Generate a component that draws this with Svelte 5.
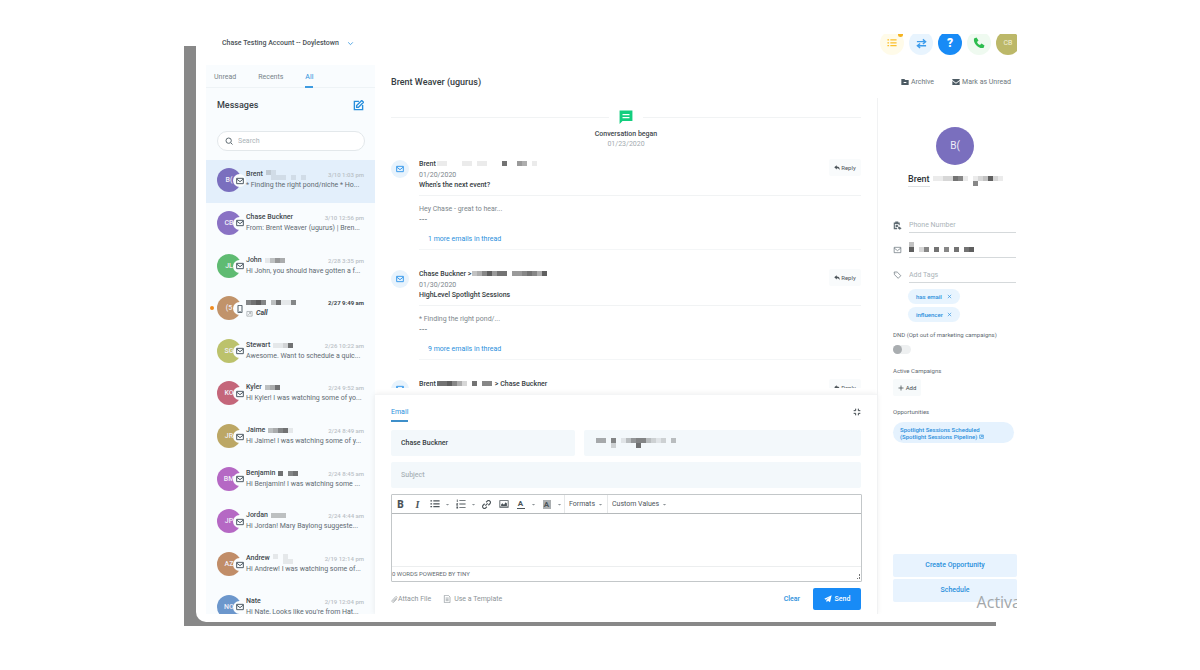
<script lang="ts">
  type Thread = {
    name: string;
    initials: string;
    color: string;
    time: string;
    preview: string;
    mask: string[];
    call?: boolean;
    active?: boolean;
  };

  const threads: Thread[] = [
    { name: 'Brent', initials: 'B(', color: '#7a6fbe', time: '3/10 1:03 pm', preview: '* Finding the right pond/niche * Ho...', mask: ['21000000', '01110101'], active: true },
    { name: 'Chase Buckner', initials: 'CB', color: '#8a72c4', time: '3/10 12:56 pm', preview: 'From: Brent Weaver (ugurus) | Bren...', mask: [] },
    { name: 'John', initials: 'JL', color: '#5fbb72', time: '2/28 3:35 pm', preview: 'Hi John, you should have gotten a f...', mask: ['1354'] },
    { name: '', initials: '(5', color: '#c1936a', time: '2/27 9:49 am', preview: 'Call', mask: ['6786037116'], call: true },
    { name: 'Stewart', initials: 'SG', color: '#bcc26c', time: '2/26 10:22 am', preview: 'Awesome. Want to schedule a quic...', mask: ['1127'] },
    { name: 'Kyler', initials: 'KO', color: '#c4667a', time: '2/24 9:52 am', preview: 'Hi Kyler! I was watching some of yo...', mask: ['347'] },
    { name: 'Jaime', initials: 'JR', color: '#bca765', time: '2/24 8:49 am', preview: 'Hi Jaime! I was watching some of y...', mask: ['34671'] },
    { name: 'Benjamin', initials: 'BM', color: '#b568c4', time: '2/24 8:45 am', preview: 'Hi Benjamin! I was watching some ...', mask: ['7067'] },
    { name: 'Jordan', initials: 'JP', color: '#b568c4', time: '2/24 4:44 am', preview: 'Hi Jordan! Mary Baylong suggeste...', mask: ['333'] },
    { name: 'Andrew', initials: 'AZ', color: '#c18d68', time: '2/19 12:14 pm', preview: 'Hi Andrew! I was watching some of...', mask: ['1010', '0011'] },
    { name: 'Nate', initials: 'NO', color: '#6c97cc', time: '2/19 12:04 pm', preview: "Hi Nate, Looks like you're from Hat...", mask: [] }
  ];

  const emails = [
    { from: 'Brent', mask: ['1100011011000700540100'], to: '', date: '01/20/2020', subject: "When's the next event?", body: 'Hey Chase - great to hear...', more: '1 more emails in thread' },
    { from: 'Chase Buckner >', mask: ['346857705567648'], to: '', date: '01/30/2020', subject: 'HighLevel Spotlight Sessions', body: '* Finding the right pond/...', more: '9 more emails in thread' },
    { from: 'Brent', mask: ['77864207066'], to: '> Chase Buckner', date: '', subject: '', body: '', more: '' }
  ];

  const tags = ['has email', 'influencer'];

  const paths: Record<string, string> = {
    down: 'M4 8l8 8 8-8',
    search: 'M17.5 17.5l5 5M11 3a8 8 0 100 16 8 8 0 000-16z',
    compose: 'M13 3H3v18h18V11M8 16v-4L19 1l4 4-11 11z',
    mail: 'M2 4h20v16H2zM2 6l10 8L22 6',
    phone: 'M6 1h12v22H6zM10 20h4',
    tag: 'M2 3h9l11 11-8 8L3 11zM7 7v1',
    expand: 'M8 2v6H2M16 2v6h6M8 22v-6H2M16 22v-6h6',
    doc: 'M4 1h12l5 5v17H4zM8 9h9M8 13h9M8 17h9',
    clip: 'M20 10l-9 10a4 4 0 01-7-5L15 3a3 3 0 015 4L10 18a2 2 0 01-2-3l8-8',
    close: 'M4 4l16 16M20 4L4 20',
    plus: 'M12 2v20M2 12h20',
    link: 'M9 15l6-6M11 6l3-3a4 4 0 017 7l-4 4M13 18l-3 3a4 4 0 01-7-7l4-4',
    swap: 'M2 8h18M15 3l6 5-6 5M22 17H4M9 12l-6 5 6 5',
    out: 'M3 5h18v16H3zM7 17l9-8M10 9h6v6',
    caret: 'M4 9h16l-8 8z',
    chat: 'M1 1h22v18H6l-5 5zM6 7v2h12V7zM6 12v2h12v-2z',
    reply: 'M1 9l10-8v5c8 0 12 4 12 15-3-6-6-8-12-8v5z',
    folder: 'M1 3h9l3 3h10v15H1zM8 12v3h8v-3z',
    mailFill: 'M1 3h22v3l-11 8L1 6zM1 9l11 8 11-8v12H1z',
    send: 'M1 11L23 1l-5 21-6-5-4 5-1-7 11-9-13 8z',
    call: 'M2 3l5-2 4 6-3 3c1 3 3 5 6 6l3-3 6 4-2 5C11 24 0 13 2 3z',
    list: 'M1 3h4v3H1zM8 3h15v3H8zM1 10h4v3H1zM8 10h15v3H8zM1 17h4v3H1zM8 17h15v3H8z',
    numbers: 'M2 1h2v6H2zM1 10h4v2l-2 3h2v1H1zM1 18h4v5H1zM8 3h15v2H8zM8 11h15v2H8zM8 19h15v2H8z',
    image: 'M1 3h22v18H1zM3 18h18V5H3zM5 17v-4l3-3 4 4 4-6 3 3v6z',
    contact: 'M2 4h4V1h8v3h4v7h-3V8H5v10h6v4H2zM7 10h6v6H7zM15 14l8 5-5 4-5-4z'
  };
  const filled = ['caret', 'chat', 'reply', 'folder', 'mailFill', 'send', 'call', 'list', 'numbers', 'image', 'contact'];
</script>

{#snippet icon(name: string, size: number)}
  <svg class="icon" class:icon--fill={filled.includes(name)} width={size} height={size} viewBox="0 0 24 24" aria-hidden="true">
    <path d={paths[name]} fill-rule="evenodd" />
  </svg>
{/snippet}

<!-- Hidden personal data: one digit per cell, higher is darker -->
{#snippet mosaic(rows: string[])}
  {#if rows.length}
    <svg class="mosaic" width={rows[0].length * 5} height={rows.length * 5} aria-hidden="true">
      {#each rows as row, y}
        {#each row as shade, x}
          <rect x={x * 5} y={y * 5} width="5" height="5" fill="#222" fill-opacity={+shade / 11} />
        {/each}
      {/each}
    </svg>
  {/if}
{/snippet}

<div class="page">
  <div class="frame">
    <div class="app">
      <header class="topbar">
        <button class="account">Chase Testing Account -- Doylestown {@render icon('down', 7)}</button>
        <nav class="topbar__actions">
          <button class="round round--yellow" aria-label="Tasks">{@render icon('list', 10)}<i class="round__dot"></i></button>
          <button class="round round--blue" aria-label="Switch">{@render icon('swap', 11)}</button>
          <button class="round round--help" aria-label="Help">?</button>
          <button class="round round--green" aria-label="Call">{@render icon('call', 12)}</button>
          <button class="round round--user">CB</button>
        </nav>
      </header>

      <aside class="sidebar">
        <nav class="tabs">
          <a href="#unread">Unread</a>
          <a href="#recents">Recents</a>
          <a href="#all" class="is-active">All</a>
        </nav>
        <div class="sidebar__head">
          <h2>Messages</h2>
          <button class="compose" aria-label="New message">{@render icon('compose', 11)}</button>
        </div>
        <label class="search">
          {@render icon('search', 8)}
          <input type="text" placeholder="Search" aria-label="Search" />
        </label>
        <ul class="threads">
          {#each threads as thread}
            <li class="thread" class:thread--active={thread.active} class:thread--call={thread.call}>
              {#if thread.call}<i class="thread__dot"></i>{/if}
              <div class="avatar" style:background={thread.color}>
                {thread.initials}
                <span class="avatar__badge">{@render icon(thread.call ? 'phone' : 'mail', 8)}</span>
              </div>
              <div class="thread__text">
                <div class="thread__top">
                  <strong>{thread.name}</strong>
                  {@render mosaic(thread.mask)}
                  <time>{thread.time}</time>
                </div>
                <p>{#if thread.call}{@render icon('out', 7)}{/if}{thread.preview}</p>
              </div>
            </li>
          {/each}
        </ul>
      </aside>

      <main class="main">
        <div class="main__head">
          <h1>Brent Weaver (ugurus)</h1>
          <button class="plain">{@render icon('folder', 8)}Archive</button>
          <button class="plain">{@render icon('mailFill', 8)}Mark as Unread</button>
        </div>

        <section class="conversation">
          <div class="began">
            <div class="began__line">{@render icon('chat', 14)}</div>
            <strong>Conversation began</strong>
            <time>01/23/2020</time>
          </div>
          {#each emails as email}
            <article class="email">
              <span class="email__icon">{@render icon('mail', 8)}</span>
              <div class="email__content">
                <div class="email__head">
                  <h3>{email.from}{@render mosaic(email.mask)}<span>{email.to}</span></h3>
                  {#if email.date}<time>{email.date}</time>{/if}
                  {#if email.subject}<h3>{email.subject}</h3>{/if}
                  <button class="reply">{@render icon('reply', 6)}Reply</button>
                </div>
                {#if email.body}
                  <div class="email__body">
                    <p>{email.body}</p>
                    <p><b>---</b></p>
                    <a href="#thread">{email.more}</a>
                  </div>
                {/if}
              </div>
            </article>
          {/each}
        </section>

        <form class="composer" onsubmit={(e) => e.preventDefault()}>
          <div class="composer__head">
            <a href="#email">Email</a>
            <button type="button" aria-label="Collapse">{@render icon('expand', 8)}</button>
          </div>
          <div class="composer__row">
            <input class="field" type="text" value="Chase Buckner" aria-label="From name" />
            <div class="field field--masked">{@render mosaic(['4406013566321203', '0002000070000000'])}</div>
          </div>
          <input class="field" type="text" placeholder="Subject" aria-label="Subject" />
          <div class="editor">
            <div class="toolbar">
              <button type="button" class="tool"><b>B</b></button>
              <button type="button" class="tool"><em>I</em></button>
              <button type="button" class="tool" aria-label="Bullet list">{@render icon('list', 10)}</button>
              <button type="button" class="tool tool--caret" aria-label="Bullet options">{@render icon('caret', 5)}</button>
              <button type="button" class="tool" aria-label="Numbered list">{@render icon('numbers', 10)}</button>
              <button type="button" class="tool tool--caret" aria-label="Number options">{@render icon('caret', 5)}</button>
              <button type="button" class="tool" aria-label="Link">{@render icon('link', 9)}</button>
              <button type="button" class="tool" aria-label="Image">{@render icon('image', 10)}</button>
              <button type="button" class="tool"><u>A</u></button>
              <button type="button" class="tool tool--caret" aria-label="Text colours">{@render icon('caret', 5)}</button>
              <button type="button" class="tool"><mark>A</mark></button>
              <button type="button" class="tool tool--caret" aria-label="Background colours">{@render icon('caret', 5)}</button>
              <label class="drop"><select aria-label="Formats"><option>Formats</option></select>{@render icon('caret', 5)}</label>
              <label class="drop"><select aria-label="Custom Values"><option>Custom Values</option></select>{@render icon('caret', 5)}</label>
            </div>
            <textarea aria-label="Message"></textarea>
            <div class="status">
              <span>0 WORDS POWERED BY TINY</span>
              <svg width="6" height="6" viewBox="0 0 6 6" aria-hidden="true"><path d="M4 0h1v2H4zM2 4h1v1H2zM4 3h1v2H4z" fill="#777" /></svg>
            </div>
          </div>
          <div class="composer__foot">
            <button type="button" class="soft">{@render icon('clip', 7)}Attach File</button>
            <button type="button" class="soft soft--template">{@render icon('doc', 8)}Use a Template</button>
            <button type="reset" class="clear">Clear</button>
            <button type="submit" class="send">{@render icon('send', 8)}Send</button>
          </div>
        </form>

        <aside class="contact">
          <div class="contact__avatar">B(</div>
          <h2 class="contact__name"><span>Brent</span>{@render mosaic(['11227610123821', '00000000600000'])}</h2>
          <div class="line">
            {@render icon('contact', 9)}
            <input type="tel" placeholder="Phone Number" aria-label="Phone Number" />
          </div>
          <div class="line">
            {@render icon('mail', 8)}
            <div class="line__value">{@render mosaic(['3000000000000', '8026070607078'])}</div>
          </div>
          <div class="line">
            {@render icon('tag', 8)}
            <input type="text" placeholder="Add Tags" aria-label="Add Tags" />
          </div>
          <ul class="tags">
            {#each tags as tag}
              <li>{tag}<button aria-label="Remove {tag}">{@render icon('close', 5)}</button></li>
            {/each}
          </ul>
          <label class="dnd">
            DND (Opt out of marketing campaigns)
            <input type="checkbox" />
          </label>
          <h4>Active Campaigns</h4>
          <button class="add">{@render icon('plus', 6)}Add</button>
          <h4>Opportunities</h4>
          <a class="opportunity" href="#opportunity">
            Spotlight Sessions Scheduled<br />(Spotlight Sessions Pipeline) {@render icon('out', 5)}
          </a>
          <div class="contact__foot">
            <button>Create Opportunity</button>
            <button>Schedule</button>
          </div>
        </aside>
      </main>
      <span class="watermark">Activa</span>
    </div>
  </div>
</div>

<style>
  :global(body) {
    background: #fff;
  }

  .page {
    box-sizing: border-box;
    height: 100vh;
    min-height: 560px;
    padding: 34px 183px 44px 184px;
    font: 400 7px/11px Roboto, sans-serif;
    color: #5f6b72;
  }

  .page :global(*) {
    box-sizing: border-box;
  }

  /* Grey slab that sits behind the rounded window */
  .frame {
    height: 100%;
    padding: 0 0 4px 12px;
    background: linear-gradient(#888, #888) left bottom / calc(100% - 21px) calc(100% - 12px) no-repeat;
  }

  .app {
    position: relative;
    display: grid;
    grid-template: 31px minmax(0, 1fr) / 169px minmax(0, 1fr);
    height: 100%;
    border: solid #fff;
    border-width: 0 0 8px 10px;
    border-bottom-left-radius: 10px;
    background: #fff;
    overflow: hidden;
  }

  h1, h2, h3, h4, p, ul {
    margin: 0;
    padding: 0;
    font-size: inherit;
    font-weight: 500;
    list-style: none;
  }

  p {
    font-weight: 400;
  }

  button, input, select, textarea {
    margin: 0;
    padding: 0;
    border: 0;
    outline: 0;
    background: none;
    font: inherit;
    color: inherit;
  }

  button {
    display: inline-flex;
    align-items: center;
    justify-content: center;
    cursor: pointer;
  }

  a {
    color: #2a8fdc;
    text-decoration: none;
  }

  input::placeholder {
    color: #aab3b8;
    opacity: 1;
  }

  .icon {
    flex: none;
    fill: none;
    stroke: currentColor;
    stroke-width: 3;
  }

  .icon--fill {
    fill: currentColor;
    stroke: none;
  }

  .mosaic {
    flex: none;
  }

  /* Top bar */
  .topbar {
    grid-column: 1 / -1;
    display: flex;
    justify-content: space-between;
    align-items: flex-start;
    padding-left: 16px;
  }

  .account {
    gap: 8px;
    height: 18px;
    font-weight: 500;
    color: #4a5156;
  }

  .account .icon {
    color: #3e9be0;
  }

  .topbar__actions {
    display: flex;
    gap: 5px;
    margin: -3px -3px 0 0;
  }

  .round {
    position: relative;
    width: 24px;
    height: 24px;
    border-radius: 50%;
  }

  .round--yellow {
    background: #fffbe9;
    color: #fbc02d;
  }

  .round__dot {
    position: absolute;
    top: 1px;
    right: 1px;
    width: 5px;
    height: 5px;
    border-radius: 50%;
    background: #f5b31f;
  }

  .round--blue {
    background: #e8f4fe;
    color: #3c9cec;
  }

  .round--help {
    background: #188bf6;
    color: #fff;
    font-size: 12px;
    font-weight: 900;
  }

  .round--green {
    background: #effaf0;
    color: #2dbd4e;
  }

  .round--user {
    background: #bcb869;
    color: #f2f0d8;
  }

  /* Sidebar */
  .sidebar {
    background: #f9fcfe;
    overflow: hidden;
  }

  .tabs {
    display: flex;
    gap: 22px;
    height: 23px;
    padding-left: 8px;
    border-bottom: 1px solid #eef3f6;
  }

  .tabs a {
    height: 23px;
    border-bottom: 2px solid transparent;
    line-height: 25px;
    color: #788389;
  }

  .tabs .is-active {
    border-color: #3e9be0;
    color: #2a8fdc;
  }

  .sidebar__head {
    display: flex;
    justify-content: space-between;
    align-items: center;
    height: 35px;
    padding: 0 11px;
    font-size: 9px;
    color: #3a4247;
  }

  .compose {
    color: #2a8fdc;
  }

  .search {
    display: flex;
    align-items: center;
    gap: 5px;
    height: 20px;
    margin: 8px 10px 9px 11px;
    padding: 0 7px;
    border: 1px solid #e3e8eb;
    border-radius: 10px;
    background: #fff;
  }

  .search input {
    width: 100%;
  }

  .threads {
    display: grid;
    grid-template-rows: repeat(11, 1fr);
    height: 469px;
  }

  .thread {
    position: relative;
    display: flex;
    align-items: center;
    gap: 5px;
    padding: 0 8px 2px 11px;
  }

  .thread--active {
    background: #e3effb;
  }

  .thread__dot {
    position: absolute;
    top: 18px;
    left: 4px;
    width: 4px;
    height: 4px;
    border-radius: 50%;
    background: #f08a1c;
  }

  .avatar {
    position: relative;
    flex: none;
    width: 24px;
    height: 24px;
    border-radius: 50%;
    line-height: 25px;
    text-align: center;
    color: #f1eef8;
  }

  .avatar__badge {
    position: absolute;
    top: 6px;
    right: -5px;
    display: flex;
    align-items: center;
    justify-content: center;
    width: 13px;
    height: 13px;
    border-radius: 50%;
    background: #fbfdfe;
    color: #4f5c66;
  }

  .thread__text {
    flex: 1;
    min-width: 0;
  }

  .thread__top {
    display: flex;
    align-items: center;
    gap: 3px;
    height: 11px;
    padding-right: 3px;
  }

  .thread__top strong {
    font-weight: 500;
    color: #3f484d;
  }

  .thread__top time {
    margin-left: auto;
    font-size: 6px;
    color: #b9c1c6;
  }

  .thread__text p {
    white-space: nowrap;
  }

  .thread--call .thread__top {
    gap: 0;
  }

  .thread--call time {
    font-weight: 700;
    color: #3f484d;
  }

  .thread--call p {
    display: flex;
    align-items: center;
    gap: 3px;
    font-style: italic;
    font-weight: 700;
    color: #3f484d;
  }

  .thread--call p .icon {
    stroke-width: 2;
    opacity: 0.6;
  }

  /* Main area */
  .main {
    display: grid;
    grid-template: 33px minmax(0, 1fr) auto / minmax(0, 1fr) 140px;
  }

  .main__head {
    grid-column: 1 / -1;
    display: flex;
    align-items: center;
    gap: 18px;
    padding: 1px 6px 0 16px;
  }

  .main__head h1 {
    margin-right: auto;
    font-size: 9px;
    color: #363d42;
  }

  .plain {
    gap: 2px;
    color: #6d777d;
  }

  .plain .icon {
    color: #4c5a63;
  }

  .conversation {
    padding: 12px 16px 0;
    margin-bottom: 6px;
    overflow: hidden;
  }

  .began {
    display: flex;
    flex-direction: column;
    align-items: center;
    margin-bottom: 10px;
    line-height: 10px;
  }

  .began__line {
    display: flex;
    align-items: center;
    gap: 10px;
    width: 100%;
    margin-bottom: 5px;
    color: #13ce7e;
  }

  .began__line::before,
  .began__line::after {
    content: '';
    flex: 1;
    height: 1px;
    background: #f1f3f4;
  }

  .began strong {
    font-weight: 500;
    color: #3f484d;
  }

  .began time {
    color: #a3abb0;
  }

  .email {
    display: flex;
    gap: 10px;
    height: 110px;
  }

  .email:last-child {
    height: 38px;
  }

  .email__icon {
    display: flex;
    align-items: center;
    justify-content: center;
    width: 18px;
    height: 18px;
    margin-top: 1px;
    border-radius: 50%;
    background: #e8f3fc;
    color: #3c9cec;
  }

  .email__content {
    flex: 1;
  }

  .email__head {
    position: relative;
    height: 37px;
    border-bottom: 1px solid #f1f3f4;
    line-height: 10px;
  }

  .email__head h3 {
    display: flex;
    gap: 1px;
    height: 11px;
    line-height: 11px;
    color: #363d42;
  }

  .email__head h3 .mosaic {
    margin-top: 2px;
  }

  .email__head h3 span {
    margin-left: 2px;
  }

  .email__head time {
    display: block;
    color: #7d868b;
  }

  .reply {
    position: absolute;
    top: 0;
    right: 0;
    gap: 1px;
    width: 32px;
    height: 17px;
    border-radius: 2px;
    background: #f9fbfc;
    font-size: 6px;
    color: #4c5459;
  }

  .email__body {
    height: 54px;
    padding-top: 8px;
    border-bottom: 1px solid #f4f6f7;
    color: #7d868b;
  }

  .email__body a {
    display: block;
    margin: 8px 0 0 9px;
  }

  /* Composer */
  .composer {
    grid-row: 3;
    display: flex;
    flex-direction: column;
    gap: 6px;
    padding: 7px 16px 4px;
    border-top: 1px solid #f4f5f6;
    box-shadow: 0 0 6px rgb(0 0 0 / 8%);
  }

  .composer__head {
    display: flex;
    justify-content: space-between;
    align-items: center;
    height: 20px;
    margin-bottom: 2px;
    color: #3f484d;
  }

  .composer__head a {
    height: 20px;
    border-bottom: 2px solid #3e8fca;
    line-height: 20px;
  }

  .composer__row {
    display: grid;
    grid-template-columns: 2fr 3fr;
    gap: 9px;
  }

  .field {
    width: 100%;
    height: 26px;
    padding: 0 10px;
    border-radius: 2px;
    background: #f3f8fb;
    font-weight: 500;
    color: #363d42;
  }

  .field--masked {
    padding: 8px 12px;
  }

  .editor {
    margin-right: -1px;
    border: 1px solid #c3c7c9;
    border-radius: 1px;
  }

  .toolbar {
    display: flex;
    height: 19px;
    border-bottom: 1px solid #b5b9bb;
    color: #4c5459;
  }

  .tool {
    width: 17px;
    font-size: 9px;
  }

  .tool b,
  .tool em {
    font-weight: 900;
    font-size: 10px;
  }

  .tool em {
    font-family: "Liberation Serif", serif;
  }

  .tool u,
  .tool mark {
    width: 8px;
    border-bottom: 1px solid #4c5459;
    font-weight: 700;
    font-size: 8px;
    line-height: 8px;
    text-decoration: none;
    color: inherit;
  }

  .tool mark {
    border: 0;
    background: #aaaeb0;
    line-height: 9px;
  }

  .tool--caret {
    width: 9px;
    color: #8d9498;
  }

  .drop {
    display: flex;
    align-items: center;
    gap: 2px;
    padding: 0 4px;
    border-left: 1px solid #e6e8e9;
  }

  .drop select {
    appearance: none;
  }

  .drop .icon {
    color: #8d9498;
  }

  textarea {
    display: block;
    width: 100%;
    height: 52px;
    resize: none;
  }

  .status {
    display: flex;
    justify-content: space-between;
    align-items: flex-end;
    height: 15px;
    padding-bottom: 1px;
    border-top: 1px solid #eceeef;
    font-size: 6px;
  }

  .status span {
    line-height: 13px;
  }

  .composer__foot {
    display: flex;
    align-items: center;
    height: 22px;
    color: #8d9498;
  }

  .soft .icon {
    stroke-width: 2;
  }

  .soft--template {
    gap: 3px;
    margin-left: 12px;
  }

  .clear {
    margin: 0 13px 0 auto;
    font-weight: 500;
    color: #2a8fdc;
  }

  .send {
    gap: 3px;
    width: 48px;
    height: 22px;
    border-radius: 2px;
    background: #188bf6;
    font-weight: 500;
    color: #fff;
  }

  /* Contact panel */
  .contact {
    grid-column: 2;
    grid-row: 2 / 4;
    display: flex;
    flex-direction: column;
    align-items: flex-start;
    padding: 29px 0 12px 15px;
    border-left: 1px solid #f1f2f3;
    font-size: 6px;
    line-height: 7px;
  }

  .contact__avatar {
    align-self: center;
    width: 38px;
    height: 38px;
    border-radius: 50%;
    background: #7a6fbe;
    font-size: 10px;
    line-height: 38px;
    text-align: center;
    color: #efedf8;
  }

  .contact__name {
    display: flex;
    gap: 3px;
    height: 15px;
    margin: 7px 0 30px 15px;
    font-size: 9px;
    line-height: 14px;
    color: #2d3337;
  }

  .contact__name span {
    border-bottom: 1px solid #dfe2e4;
  }

  .contact__name .mosaic {
    margin-top: 4px;
  }

  .line {
    display: flex;
    align-items: center;
    gap: 7px;
    width: 100%;
    height: 16px;
    margin-bottom: 9px;
    padding-right: 1px;
    font-size: 7px;
  }

  .line .icon {
    width: 9px;
    stroke-width: 2;
  }

  .line input,
  .line__value {
    flex: 1;
    min-width: 0;
    height: 16px;
    border-bottom: 1px solid #d5d9db;
  }

  .tags {
    display: grid;
    gap: 3px;
    margin: -3px 0 9px 15px;
  }

  .tags li {
    display: flex;
    align-items: center;
    justify-content: space-between;
    gap: 4px;
    height: 15px;
    padding: 0 8px;
    border-radius: 8px;
    background: #e8f4fe;
    color: #2a8fdc;
  }

  .dnd {
    display: grid;
    gap: 7px;
    margin-bottom: 13px;
  }

  .dnd input {
    appearance: none;
    width: 18px;
    height: 9px;
    border-radius: 5px;
    background: #eef0f1;
  }

  .dnd input::before {
    content: '';
    display: block;
    width: 9px;
    height: 9px;
    border-radius: 50%;
    background: #a9adb0;
  }

  h4 {
    font-weight: 400;
  }

  .add {
    gap: 2px;
    width: 28px;
    height: 17px;
    margin: 5px 0 12px;
    border-radius: 2px;
    background: #f7fafb;
    color: #3f484d;
  }

  .opportunity {
    width: 121px;
    margin-top: 7px;
    padding: 4px 7px 3px;
    border-radius: 11px;
    background: #e5f2fe;
    font-weight: 500;
  }

  .contact__foot {
    display: grid;
    gap: 2px;
    width: 100%;
    margin-top: auto;
  }

  .contact__foot button {
    height: 23px;
    border-radius: 2px;
    background: #e8f3fe;
    font-size: 7px;
    font-weight: 500;
    color: #2a8fdc;
  }

  .watermark {
    position: absolute;
    right: -4px;
    bottom: 2px;
    font: 16px/20px "Open Sans", sans-serif;
    color: #a3a7aa;
    pointer-events: none;
  }
</style>
